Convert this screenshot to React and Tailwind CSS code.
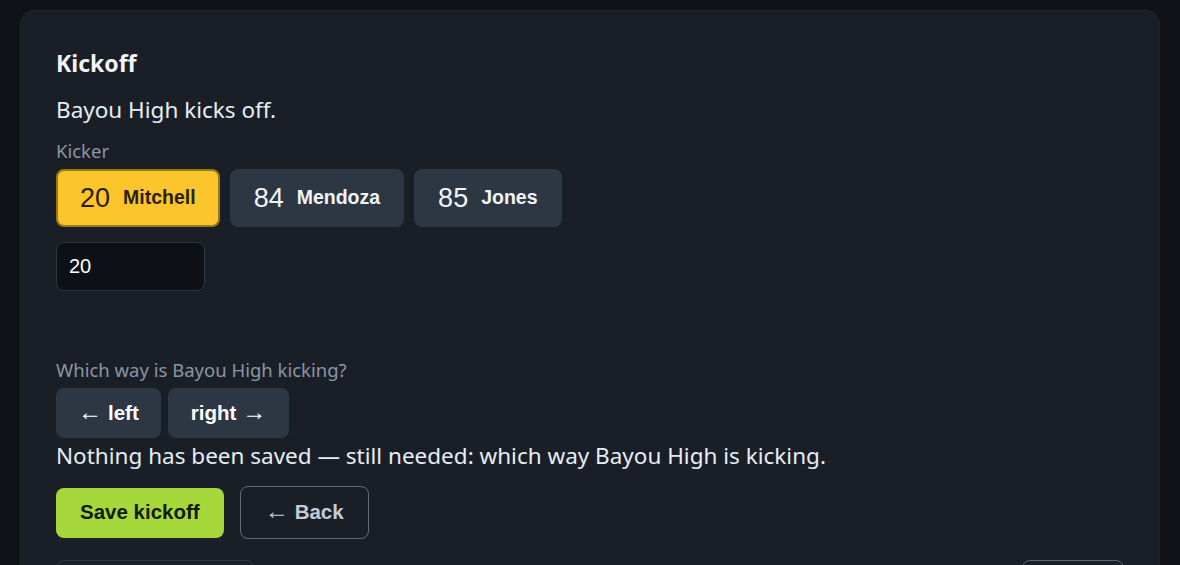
import React, { useState } from 'react'

const kickers = [
    { num: '20', name: 'Mitchell' },
    { num: '84', name: 'Mendoza' },
    { num: '85', name: 'Jones' },
]

function Arrow({ children, side }) {
    return (
        <span className={side === 'left' ? 'mr-[6px] text-[24px] font-normal leading-none' : 'ml-[6px] text-[24px] font-normal leading-none'}>
            {children}
        </span>
    )
}

export default function App() {
    const [kicker, setKicker] = useState('20')

    return (
        <div className="min-h-screen bg-[#0f1217] px-5 pt-[10px] font-['Noto_Sans',sans-serif]">
            <div className="rounded-[14px] border border-[#1f252e] bg-[#1a1f27] px-[35px] pt-[38px] pb-10">
                <h2 className="text-[23px] font-bold leading-[28px] text-[#f3f4f6]">Kickoff</h2>
                <p className="mt-[18px] text-[22.5px] leading-[30px] text-[#e6edf3]">Bayou High kicks off.</p>

                <div className="mt-[14px] text-[18.5px] leading-6 text-[#8b95a3]">Kicker</div>
                <div className="mt-[6px] flex gap-[10px] font-['Liberation_Sans',Arial,sans-serif]">
                    {kickers.map((k) => {
                        const active = k.num === kicker
                        return (
                            <button
                                key={k.num}
                                onClick={() => setKicker(k.num)}
                                className={
                                    active
                                        ? 'flex h-[58px] items-center gap-[13px] rounded-lg border-2 border-[#9a7812] bg-[#fcc52c] px-[22px] text-[#2a1f05]'
                                        : 'flex h-[58px] items-center gap-[13px] rounded-lg border-2 border-transparent bg-[#2d3744] px-[22px] text-[#f3f4f6]'
                                }
                            >
                                <span className="text-[27px] leading-none">{k.num}</span>
                                <span className="text-[19.5px] font-bold leading-none">{k.name}</span>
                            </button>
                        )
                    })}
                </div>

                <input
                    value={kicker}
                    onChange={(e) => setKicker(e.target.value)}
                    className="mt-[15px] block h-[49px] w-[149px] rounded-lg border border-[#2f3640] bg-[#0d1117] px-3 font-['Liberation_Sans',Arial,sans-serif] text-[20px] text-white outline-none"
                />

                <div className="mt-[67px] text-[18.5px] leading-6 text-[#8b95a3]">Which way is Bayou High kicking?</div>
                <div className="mt-[6px] flex gap-[7px] font-['Liberation_Sans',Arial,sans-serif]">
                    <button className="h-[50px] rounded-lg bg-[#2d3744] px-[22px] text-[20.5px] font-bold text-white">
                        <Arrow side="left">←</Arrow>left
                    </button>
                    <button className="h-[50px] rounded-lg bg-[#2d3744] px-[23px] text-[20.5px] font-bold text-white">
                        right<Arrow side="right">→</Arrow>
                    </button>
                </div>

                <p className="mt-[3px] text-[22.5px] leading-[30px] text-[#e6edf3]">
                    Nothing has been saved — still needed: which way Bayou High is kicking.
                </p>

                <div className="mt-[15px] flex items-center gap-4 font-['Liberation_Sans',Arial,sans-serif]">
                    <button className="h-[50px] rounded-lg bg-[#a6d83b] px-6 text-[20.5px] font-bold text-[#111a05]">Save kickoff</button>
                    <button className="h-[53px] rounded-lg border border-[#5f6b7d] px-6 text-[20.5px] font-bold text-[#c3ccd8]">
                        <Arrow side="left">←</Arrow>Back
                    </button>
                </div>

                <div className="mt-[21px] flex items-start justify-between">
                    <div className="h-10 w-[198px] rounded-lg border border-[#2f3640]"></div>
                    <div className="h-10 w-[102px] rounded-lg border border-[#5b6472]"></div>
                </div>
            </div>
        </div>
    )
}
